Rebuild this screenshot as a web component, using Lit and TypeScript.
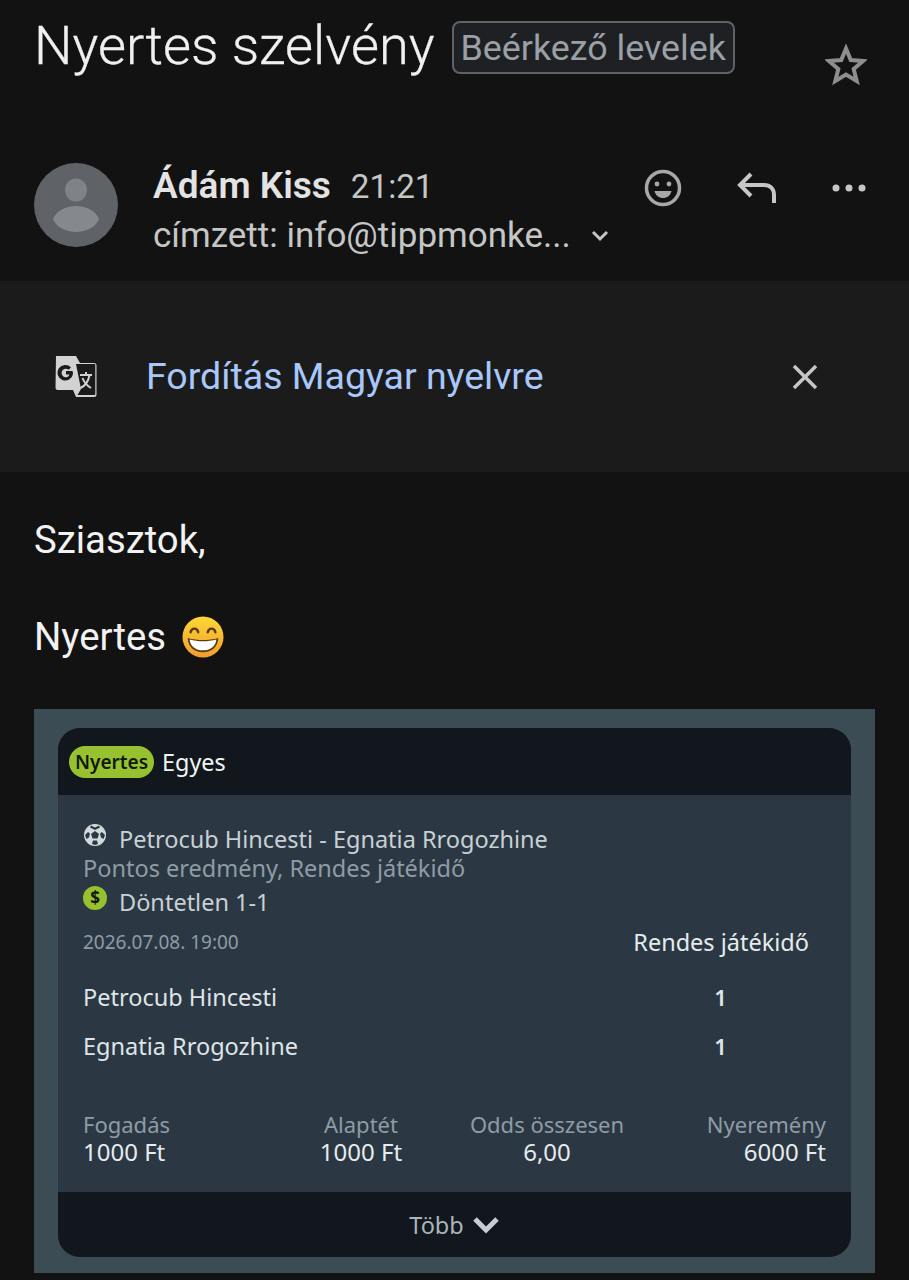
import { LitElement, html, css } from "lit";
import { customElement } from "lit/decorators.js";

const stake = [
  { label: "Fogadás", value: "1000 Ft", cls: "start" },
  { label: "Alaptét", value: "1000 Ft", cls: "mid" },
  { label: "Odds összesen", value: "6,00", cls: "mid" },
  { label: "Nyeremény", value: "6000 Ft", cls: "end" },
];

@customElement("app-root")
export class AppRoot extends LitElement {
  static styles = css`
    :host {
      display: block;
      width: 909px;
      height: 1280px;
      overflow: hidden;
      background: #121212;
      color: #e8e8e8;
      font-family: Roboto, "Liberation Sans", sans-serif;
    }

    .subject {
      display: flex;
      align-items: flex-start;
      height: 163px;
      box-sizing: border-box;
      padding: 14px 42px 0 34px;
    }
    .subject__title {
      font-size: 54.200px;
      line-height: 64px;
      font-weight: 300;
      -webkit-text-stroke: 0.3px #f0f0f0;
      color: #f0f0f0;
      white-space: nowrap;
    }
    .subject__label {
      margin: 7px 0 0 17px;
      height: 53px;
      box-sizing: border-box;
      padding: 0 7px;
      border: 2px solid #5f6368;
      border-radius: 8px;
      background: #1e2023;
      color: #9aa0a6;
      font-size: 35.800px;
      line-height: 50px;
      white-space: nowrap;
    }
    .subject__star {
      margin: 30px 0 0 auto;
      width: 42px;
      height: 42px;
      flex: none;
    }

    .sender {
      display: flex;
      height: 118px;
      padding: 0 34px;
      box-sizing: border-box;
    }
    .avatar {
      width: 84px;
      height: 84px;
      flex: none;
    }
    .sender__info {
      margin-left: 35px;
      flex: 1;
    }
    .sender__top {
      display: flex;
      align-items: baseline;
      gap: 20px;
      height: 45px;
      line-height: 45px;
    }
    .sender__name {
      font-size: 37px;
      font-weight: 600;
      color: #e3e3e3;
    }
    .sender__time {
      font-size: 33.200px;
      color: #c4c7c5;
    }
    .sender__to {
      display: flex;
      align-items: center;
      margin-top: 8px;
      font-size: 35px;
      line-height: 40px;
      color: #c4c7c5;
    }
    .sender__chevron {
      width: 18px;
      height: 12px;
      margin-left: 20px;
    }
    .sender__actions {
      display: flex;
      align-items: center;
      gap: 55px;
      height: 50px;
      padding-right: 9px;
    }

    .banner {
      display: flex;
      align-items: center;
      height: 191px;
      padding: 0 90px 0 54px;
      background: #1b1b1b;
    }
    .banner__icon {
      width: 44px;
      height: 44px;
      flex: none;
    }
    .banner__text {
      margin-left: 48px;
      flex: 1;
      font-size: 37.500px;
      line-height: 42px;
      margin-top: -2px;
      color: #a8c7fa;
    }
    .banner__close {
      width: 28px;
      height: 28px;
    }

    .body {
      padding: 43px 34px 0;
      font-size: 38.300px;
      line-height: 50px;
      color: #f2f2f2;
    }
    .body p {
      margin: 0 0 47px;
      display: flex;
      align-items: center;
      gap: 16px;
    }
    .emoji {
      width: 42px;
      height: 42px;
    }

    .ticket {
      height: 564px;
      box-sizing: border-box;
      padding: 19px 24px 16px;
      background: #3c4c55;
      font-family: "Noto Sans", "Open Sans", sans-serif;
      line-height: normal;
    }
    .card {
      display: flex;
      flex-direction: column;
      height: 100%;
      border-radius: 22px;
      overflow: hidden;
      background: #2b3843;
    }
    .card__head {
      display: flex;
      align-items: center;
      gap: 8px;
      height: 67px;
      padding: 0 11px;
      background: #11171c;
      color: #f0f4f5;
      font-size: 23.400px;
    }
    .badge {
      height: 32px;
      padding: 0 6px;
      border-radius: 16px;
      background: #97c12e;
      color: #10180a;
      font-size: 19px;
      font-weight: 600;
      line-height: 32px;
    }
    .card__main {
      flex: 1;
      padding: 28px 25px 0;
      font-size: 23.500px;
      color: #c8d0d5;
    }
    .line {
      display: flex;
      align-items: center;
      gap: 12px;
      height: 31px;
    }
    .line svg {
      width: 24px;
      height: 24px;
      flex: none;
      margin-top: -8px;
    }
    .muted {
      color: #8f9ca5;
      height: 32px;
      line-height: 28px;
    }
    .time-row {
      display: flex;
      justify-content: space-between;
      align-items: center;
      margin-top: 5px;
      padding-right: 17px;
      height: 40px;
    }
    .time-row__date {
      font-size: 19px;
      color: #8f9ca5;
    }
    .time-row__period {
      color: #e6ebee;
    }
    .team {
      display: grid;
      grid-template-columns: 1fr 211px;
      height: 49px;
      align-items: center;
      color: #dfe5e8;
    }
    .team__score {
      text-align: center;
      font-weight: 600;
      font-size: 22px;
    }
    .teams {
      margin-top: 10px;
    }
    .totals {
      display: grid;
      grid-template-columns: 200px 156px 216px 1fr;
      margin-top: 40px;
      line-height: 28px;
      white-space: nowrap;
    }
    .totals span {
      display: block;
      font-size: 22px;
      color: #8f9ca5;
    }
    .totals b {
      display: block;
      font-size: 24px;
      font-weight: 400;
      color: #e6ebee;
    }
    .totals .mid {
      text-align: center;
    }
    .totals .end {
      text-align: right;
    }
    .card__foot {
      display: flex;
      align-items: center;
      justify-content: center;
      gap: 8px;
      height: 65px;
      background: #11171c;
      color: #aab4bb;
      font-size: 23.500px;
    }
    .card__foot svg {
      width: 28px;
      height: 18px;
    }
  `;

  render() {
    return html`
      <div class="subject">
        <div class="subject__title">Nyertes szelvény</div>
        <div class="subject__label">Beérkező levelek</div>
        <svg class="subject__star" viewBox="0 0 46 46" fill="none" stroke="#8e8e8e" stroke-width="4.400">
          <path d="M23 5l5.2 12.6 13.6 1-10.4 8.800 3.300 13.200L23 33.400l-11.700 7.200 3.300-13.200L4.200 18.600l13.600-1z" />
        </svg>
      </div>

      <div class="sender">
        <svg class="avatar" viewBox="0 0 84 84">
          <circle cx="42" cy="42" r="42" fill="#5f6368" />
          <ellipse cx="42" cy="27" rx="11" ry="11.500" fill="#7f8286" />
          <path d="M42 43c10 0 20 5 23 13-3 8-13 13-23 13S22 64 19 56c3-8 13-13 23-13z" fill="#85888c" />
        </svg>
        <div class="sender__info">
          <div class="sender__top">
            <span class="sender__name">Ádám Kiss</span>
            <span class="sender__time">21:21</span>
          </div>
          <div class="sender__to">
            <span>címzett: info@tippmonke...</span>
            <svg class="sender__chevron" viewBox="0 0 18 12" fill="none" stroke="#c4c7c5" stroke-width="3">
              <path d="M2 2l7 7 7-7" />
            </svg>
          </div>
        </div>
        <div class="sender__actions">
          <svg width="38" height="38" viewBox="0 0 38 38" fill="none" stroke="#a8a8a8" stroke-width="3.500">
            <circle cx="19" cy="19" r="16.500" />
            <circle cx="13" cy="15" r="2.400" fill="#a8a8a8" stroke="none" />
            <circle cx="25" cy="15" r="2.400" fill="#a8a8a8" stroke="none" />
            <path d="M10.500 22h17c-1 4.500-4.500 7-8.500 7s-7.500-2.500-8.500-7z" fill="#a8a8a8" stroke="none" />
          </svg>
          <svg width="40" height="34" viewBox="0 0 40 34" fill="none" stroke="#c4c7c5" stroke-width="4">
            <path d="M14 3L3 14l11 11" />
            <path d="M3 14h24c6 0 10 4 10 10v8" />
          </svg>
          <svg width="34" height="8" viewBox="0 0 34 8" fill="#c4c7c5">
            <circle cx="4" cy="4" r="3.500" />
            <circle cx="17" cy="4" r="3.500" />
            <circle cx="30" cy="4" r="3.500" />
          </svg>
        </div>
      </div>

      <div class="banner">
        <svg class="banner__icon" viewBox="0 0 44 44">
          <path d="M2 1h20l4 7h14a2.500 2.500 0 0 1 2.500 2.500v29a2.500 2.500 0 0 1-2.500 2.500H22l-3-7H4a2.500 2.500 0 0 1-2.500-2.500z" fill="#d2d2d2" />
          <path d="M23 9h17.500a.8.8 0 0 1 .8.8v29.400a.8.8 0 0 1-.8.8H23.500l3.500-6-5-25z" fill="#1b1b1b" />
          <path d="M18 16h-6v3.400h3.400c-.6 2-2 2.800-3.600 2.800a4.200 4.200 0 0 1 0-8.400c1.200 0 2 .4 2.800 1l2.400-2.400A7.800 7.800 0 1 0 19 19c0-1-.2-2.100-.4-3z" fill="#1b1b1b" />
          <path d="M26 20h12M32 17v3M35.500 20c-1 6-5 11-9 13M28.500 23c1.500 4 5 8 8.500 10" fill="none" stroke="#d2d2d2" stroke-width="2" />
        </svg>
        <div class="banner__text">Fordítás Magyar nyelvre</div>
        <svg class="banner__close" viewBox="0 0 28 28" stroke="#c4c7c5" stroke-width="3.500">
          <path d="M3 3l22 22M25 3L3 25" />
        </svg>
      </div>

      <div class="body">
        <p>Sziasztok,</p>
        <p>
          Nyertes
          <svg class="emoji" viewBox="0 0 44 44">
            <defs>
              <linearGradient id="face" x1="0" y1="0" x2="0" y2="1">
                <stop offset="0" stop-color="#fdd835" />
                <stop offset="1" stop-color="#f39c2d" />
              </linearGradient>
            </defs>
            <circle cx="22" cy="22" r="21.500" fill="url(#face)" />
            <path d="M9 17c1-5 7-5 8 0M27 17c1-5 7-5 8 0" fill="none" stroke="#5a3a10" stroke-width="2.500" stroke-linecap="round" />
            <path d="M6 23c10 3 22 3 32 0 0 9-7 15-16 15S6 32 6 23z" fill="#5a3a10" />
            <path d="M8 24.500c9 2.500 19 2.500 28 0-.5 7-6.500 11.500-14 11.500S8.500 31.500 8 24.500z" fill="#fff" />
          </svg>
        </p>
        <div class="ticket">
          <div class="card">
            <div class="card__head">
              <span class="badge">Nyertes</span>
              <span>Egyes</span>
            </div>
            <div class="card__main">
              <div class="line">
                <svg viewBox="0 0 24 24">
                  <circle cx="12" cy="12" r="11" fill="#d3dade" />
                  <path d="M12 8l4 3-1.500 4.500h-5L8 11z" fill="#2b3843" />
                  <path d="M8 2.500l4 2 4-2 1 2-5 2.500-5-2.500zM2 12l3-3 2 1.500-1 4-2.500 1.500zM22 12l-3-3-2 1.500 1 4 2.500 1.500zM9 21l1-3.500h4l1 3.500-3 1z" fill="#2b3843" />
                </svg>
                <span>Petrocub Hincesti - Egnatia Rrogozhine</span>
              </div>
              <div class="muted">Pontos eredmény, Rendes játékidő</div>
              <div class="line">
                <svg viewBox="0 0 24 24">
                  <circle cx="12" cy="12" r="12" fill="#97c12e" />
                  <text x="12" y="18" text-anchor="middle" font-size="17" font-weight="700" fill="#10180a">$</text>
                </svg>
                <span>Döntetlen 1-1</span>
              </div>
              <div class="time-row">
                <span class="time-row__date">2026.07.08. 19:00</span>
                <span class="time-row__period">Rendes játékidő</span>
              </div>
              <div class="teams">
                <div class="team"><span>Petrocub Hincesti</span><span class="team__score">1</span></div>
                <div class="team"><span>Egnatia Rrogozhine</span><span class="team__score">1</span></div>
              </div>
              <div class="totals">
                ${stake.map(
                  (s) => html`<div class=${s.cls}><span>${s.label}</span><b>${s.value}</b></div>`
                )}
              </div>
            </div>
            <div class="card__foot">
              <span>Több</span>
              <svg viewBox="0 0 28 18" fill="none" stroke="#c5ccd2" stroke-width="5">
                <path d="M3 3l11 11L25 3" />
              </svg>
            </div>
          </div>
        </div>
      </div>
    `;
  }
}
